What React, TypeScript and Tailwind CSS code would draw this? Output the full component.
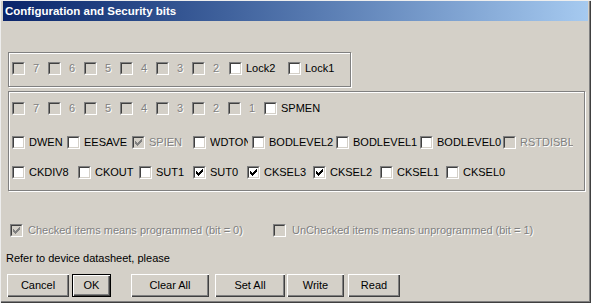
import React from "react";

type Bit = {
  label: string;
  w: string;
  checked?: boolean;
  disabled?: boolean;
  digit?: boolean;
  clip?: boolean;
};

const lockBits: Bit[] = [
  { label: "7", w: "w-[36px]", disabled: true, digit: true },
  { label: "6", w: "w-[36px]", disabled: true, digit: true },
  { label: "5", w: "w-[36px]", disabled: true, digit: true },
  { label: "4", w: "w-[36px]", disabled: true, digit: true },
  { label: "3", w: "w-[36px]", disabled: true, digit: true },
  { label: "2", w: "w-[37px]", disabled: true, digit: true },
  { label: "Lock2", w: "w-[59px]" },
  { label: "Lock1", w: "w-[50px]" },
];

const extBits: Bit[] = [
  { label: "7", w: "w-[36px]", disabled: true, digit: true },
  { label: "6", w: "w-[36px]", disabled: true, digit: true },
  { label: "5", w: "w-[36px]", disabled: true, digit: true },
  { label: "4", w: "w-[36px]", disabled: true, digit: true },
  { label: "3", w: "w-[36px]", disabled: true, digit: true },
  { label: "2", w: "w-[36px]", disabled: true, digit: true },
  { label: "1", w: "w-[36px]", disabled: true, digit: true },
  { label: "SPMEN", w: "w-[70px]" },
];

const highBits: Bit[] = [
  { label: "DWEN", w: "w-[55px]" },
  { label: "EESAVE", w: "w-[65px]" },
  { label: "SPIEN", w: "w-[61px]", checked: true, disabled: true },
  { label: "WDTON", w: "w-[59px]", clip: true },
  { label: "BODLEVEL2", w: "w-[84px]" },
  { label: "BODLEVEL1", w: "w-[84px]" },
  { label: "BODLEVEL0", w: "w-[83px]" },
  { label: "RSTDISBL", w: "w-[70px]", disabled: true },
];

const lowBits: Bit[] = [
  { label: "CKDIV8", w: "w-[66px]" },
  { label: "CKOUT", w: "w-[61px]" },
  { label: "SUT1", w: "w-[54px]" },
  { label: "SUT0", w: "w-[54px]", checked: true },
  { label: "CKSEL3", w: "w-[66px]", checked: true },
  { label: "CKSEL2", w: "w-[67px]", checked: true },
  { label: "CKSEL1", w: "w-[66px]" },
  { label: "CKSEL0", w: "w-[70px]" },
];

// classic 7x7 tick
const tick = ["......#", ".....##", "#...###", "##.###.", "#####..", ".###...", "..#...."];

function Tick({ color }: { color: string }) {
  return (
    <svg width="7" height="7" viewBox="0 0 7 7" shapeRendering="crispEdges" className="ml-[1px] mt-[1px]">
      {tick.map((row, y) =>
        row.split("").map((c, x) => (c === "#" ? <rect key={`${x}-${y}`} x={x} y={y} width="1" height="1" fill={color} /> : null))
      )}
    </svg>
  );
}

function Box({ checked, disabled }: { checked?: boolean; disabled?: boolean }) {
  return (
    <span className="flex w-[13px] h-[13px] shrink-0 border border-t-[#808080] border-l-[#808080] border-b-white border-r-white">
      <span
        className={`flex flex-1 items-start border border-t-[#404040] border-l-[#404040] border-b-[#d4d0c8] border-r-[#d4d0c8] ${
          disabled ? "bg-[#d4d0c8]" : "bg-white"
        }`}
      >
        {checked && <Tick color={disabled ? "#808080" : "#000000"} />}
      </span>
    </span>
  );
}

const dim = "text-[#808080] [text-shadow:1px_1px_0_#ffffff]";

function Item({ bit }: { bit: Bit }) {
  return (
    <div className={`flex items-center h-[13px] shrink-0 overflow-hidden ${bit.w}`}>
      <Box checked={bit.checked} disabled={bit.disabled} />
      <span
        className={`whitespace-nowrap ${bit.digit ? "ml-[8px]" : "ml-[4px]"} ${bit.disabled ? dim : ""} ${
          bit.clip ? "w-[38px] overflow-hidden shrink-0" : ""
        }`}
      >
        {bit.label}
      </span>
    </div>
  );
}

function Row({ bits }: { bits: Bit[] }) {
  return (
    <div className="flex">
      {bits.map((b) => (
        <Item key={b.label} bit={b} />
      ))}
    </div>
  );
}

const bevel = "shadow-[inset_1px_1px_0_#ffffff,inset_-1px_-1px_0_#404040,inset_-2px_-2px_0_#808080]";

function Btn({ label, w, def, className = "" }: { label: string; w: string; def?: boolean; className?: string }) {
  return (
    <button
      className={`${w} h-[23px] shrink-0 bg-[#d4d0c8] flex items-center justify-center text-[11px] leading-[13px] text-black ${bevel} ${
        def ? "border border-black" : ""
      } ${className}`}
    >
      {label}
    </button>
  );
}

export default function App() {
  return (
    <div className="w-[591px] h-[303px] overflow-hidden bg-[#d4d0c8] flex flex-col pt-[1px] pl-[3px] pr-[3px] shadow-[inset_1px_1px_0_#eeeeee,inset_-1px_-1px_0_#404040,inset_-2px_-2px_0_#808080] font-['Liberation_Sans',Arial,sans-serif] text-[11px] leading-[13px] text-black">
      <div className="h-[20px] shrink-0 flex items-center pl-[2px] bg-linear-to-r from-[#0a246a] to-[#a6caf0] text-white font-bold text-[11.5px]">
        Configuration and Security bits
      </div>

      <div className="flex flex-col pl-[5px]">
        <div className="mt-[31px] w-[343px] h-[35px] border border-[#808080] shadow-[inset_1px_1px_0_#ffffff,1px_1px_0_#ffffff] pt-[9px] pl-[3px]">
          <Row bits={lockBits} />
        </div>

        <div className="mt-[4px] w-[577px] h-[100px] border border-[#808080] shadow-[inset_1px_1px_0_#ffffff,1px_1px_0_#ffffff] pt-[10px] pl-[3px] flex flex-col">
          <Row bits={extBits} />
          <div className="mt-[21px]">
            <Row bits={highBits} />
          </div>
          <div className="mt-[17px]">
            <Row bits={lowBits} />
          </div>
        </div>

        <div className="mt-[33px] ml-[2px] flex">
          <div className="w-[263px] flex items-center h-[13px]">
            <Box checked disabled />
            <span className={`ml-[5px] whitespace-nowrap ${dim}`}>Checked items means programmed (bit = 0)</span>
          </div>
          <div className="flex items-center h-[13px]">
            <Box disabled />
            <span className={`ml-[6px] whitespace-nowrap ${dim}`}>UnChecked items means unprogrammed (bit = 1)</span>
          </div>
        </div>

        <p className="mt-[15px] -ml-[2px]">Refer to device datasheet, please</p>

        <div className="mt-[9px] -ml-[1px] flex">
          <Btn label="Cancel" w="w-[62px]" />
          <Btn label="OK" w="w-[39px]" def className="ml-[3px]" />
          <Btn label="Clear All" w="w-[78px]" className="ml-[20px]" />
          <Btn label="Set All" w="w-[70px]" className="ml-[6px]" />
          <Btn label="Write" w="w-[57px]" className="ml-[2px]" />
          <Btn label="Read" w="w-[52px]" className="ml-[4px]" />
        </div>
      </div>
    </div>
  );
}
